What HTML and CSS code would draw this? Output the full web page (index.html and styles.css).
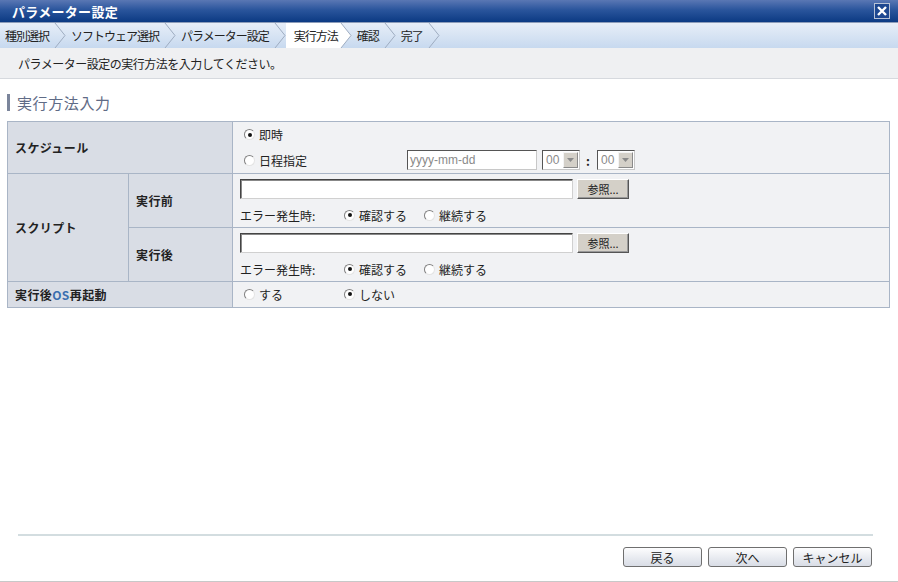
FILE: index.html
```html
<!DOCTYPE html>
<html lang="ja">
<head>
    <meta charset="UTF-8">
    <title>パラメーター設定</title>
    <link rel="stylesheet" href="styles.css">
</head>
<body>
    <div class="window">
        <div class="titlebar">
            <span class="title">パラメーター設定</span>
            <span class="close-btn">
                <svg width="14" height="14" viewBox="0 0 14 14"><path d="M3 3 L11 11 M11 3 L3 11" stroke="#fff" stroke-width="2.4" fill="none"/></svg>
            </span>
        </div>

        <div class="steps">
            <div class="step first">種別選択</div>
            <svg class="sep" width="12" height="25" viewBox="0 0 12 25"><polyline points="1,0 11,12.5 1,25" fill="none" stroke="#9eacc0"/></svg>
            <div class="step">ソフトウェア選択</div>
            <svg class="sep" width="12" height="25" viewBox="0 0 12 25"><polyline points="1,0 11,12.5 1,25" fill="none" stroke="#9eacc0"/></svg>
            <div class="step">パラメーター設定</div>
            <svg class="sep" width="12" height="25" viewBox="0 0 12 25"><polyline points="1,0 11,12.5 1,25" fill="none" stroke="#9eacc0"/></svg>
            <div class="step active">実行方法</div>
            <svg class="sep" width="12" height="25" viewBox="0 0 12 25"><polygon points="0,0 1,0 11,12.5 1,25 0,25" fill="#fff"/><polyline points="1,0 11,12.5 1,25" fill="none" stroke="#9eacc0"/></svg>
            <div class="step">確認</div>
            <svg class="sep" width="12" height="25" viewBox="0 0 12 25"><polyline points="1,0 11,12.5 1,25" fill="none" stroke="#9eacc0"/></svg>
            <div class="step">完了</div>
            <svg class="sep" width="12" height="25" viewBox="0 0 12 25"><polyline points="1,0 11,12.5 1,25" fill="none" stroke="#9eacc0"/></svg>
        </div>

        <div class="guide">パラメーター設定の実行方法を入力してください。</div>

        <div class="content">
            <h2 class="section-title">実行方法入力</h2>

            <table class="form-table">
                <colgroup>
                    <col class="col-label1">
                    <col class="col-label2">
                    <col>
                </colgroup>
                <tr class="row-schedule">
                    <th colspan="2">スケジュール</th>
                    <td class="value pad-radio">
                        <div class="line line-first">
                            <span class="opt"><span class="radio checked"></span>即時</span>
                        </div>
                        <div class="line">
                            <span class="opt opt-date"><span class="radio"></span>日程指定</span>
                            <span class="date-input">yyyy-mm-dd</span>
                            <span class="select"><span class="sel-val">00</span><span class="sel-arrow"><svg width="7" height="4" viewBox="0 0 7 4"><polygon points="0,0 7,0 3.5,4" fill="#8a8a8a"/></svg></span></span>
                            <span class="colon">:</span>
                            <span class="select"><span class="sel-val">00</span><span class="sel-arrow"><svg width="7" height="4" viewBox="0 0 7 4"><polygon points="0,0 7,0 3.5,4" fill="#8a8a8a"/></svg></span></span>
                        </div>
                    </td>
                </tr>
                <tr class="row-script">
                    <th rowspan="2">スクリプト</th>
                    <th>実行前</th>
                    <td class="value pad-input">
                        <div class="file-line">
                            <span class="text-input"></span>
                            <span class="browse-btn">参照...</span>
                        </div>
                        <div class="line err-line">
                            <span class="err-label">エラー発生時:</span>
                            <span class="opt opt-confirm"><span class="radio checked"></span>確認する</span>
                            <span class="opt"><span class="radio"></span>継続する</span>
                        </div>
                    </td>
                </tr>
                <tr class="row-script">
                    <th>実行後</th>
                    <td class="value pad-input">
                        <div class="file-line">
                            <span class="text-input"></span>
                            <span class="browse-btn">参照...</span>
                        </div>
                        <div class="line err-line">
                            <span class="err-label">エラー発生時:</span>
                            <span class="opt opt-confirm"><span class="radio checked"></span>確認する</span>
                            <span class="opt"><span class="radio"></span>継続する</span>
                        </div>
                    </td>
                </tr>
                <tr class="row-reboot">
                    <th colspan="2">実行後<span class="os">OS</span>再起動</th>
                    <td class="value pad-radio">
                        <div class="line line-reboot">
                            <span class="opt opt-reboot"><span class="radio"></span>する</span>
                            <span class="opt"><span class="radio checked"></span>しない</span>
                        </div>
                    </td>
                </tr>
            </table>
        </div>

        <div class="footer">
            <div class="footer-rule"></div>
            <div class="buttons">
                <span class="btn">戻る</span>
                <span class="btn">次へ</span>
                <span class="btn">キャンセル</span>
            </div>
        </div>
    </div>
</body>
</html>
```

FILE: styles.css
```css
* {
    margin: 0;
    padding: 0;
    box-sizing: border-box;
}

body {
    font-family: "Noto Sans CJK JP", "Noto Sans", sans-serif;
    font-size: 12px;
    color: #222;
    background: #fff;
}

.window {
    width: 898px;
    height: 582px;
    display: flex;
    flex-direction: column;
    border-bottom: 1px solid #c8c8c8;
}

/* Title bar */
.titlebar {
    height: 23px;
    display: flex;
    align-items: center;
    justify-content: space-between;
    padding: 0 8px 0 12px;
    background: linear-gradient(#5a77b4, #2a559c 45%, #0c3a83);
    border-bottom: 1px solid #8c9cb9;
}

.title {
    color: #fff;
    font-weight: bold;
    font-size: 13px;
    letter-spacing: 0.3px;
}

.close-btn {
    width: 16px;
    height: 16px;
    border: 1px solid #b7c2d6;
    display: flex;
    align-items: center;
    justify-content: center;
    background: #1d4790;
}

/* Steps */
.steps {
    height: 25px;
    display: flex;
    align-items: stretch;
    background: linear-gradient(#e7eef8, #c7d9ef);
    letter-spacing: -1px;
}

.step {
    display: flex;
    align-items: center;
    padding: 0 5px 0 5px;
    color: #222;
}

.step.first {
    padding-left: 5px;
}

.step.active {
    background: #fff;
    padding: 0 2px 0 8px;
}

.sep {
    display: block;
    flex: none;
}

/* Guide */
.guide {
    height: 31px;
    display: flex;
    align-items: center;
    padding-left: 18px;
    background: #eff0f2;
    border-bottom: 1px solid #d6d9de;
    letter-spacing: -0.5px;
}

/* Content */
.content {
    flex: 1;
    padding: 15px 8px 0 7px;
}

.section-title {
    font-size: 15px;
    font-weight: normal;
    color: #5f6b86;
    border-left: 3px solid #7b859b;
    padding-left: 7px;
    height: 17px;
    line-height: 17px;
    margin-bottom: 10px;
    letter-spacing: 0.6px;
}

.form-table {
    width: 883px;
    border-collapse: collapse;
    table-layout: fixed;
}

.col-label1 {
    width: 121px;
}

.col-label2 {
    width: 104px;
}

.form-table th,
.form-table td {
    border: 1px solid #a9b5c6;
}

.form-table th {
    background: #d9dde5;
    text-align: left;
    font-weight: bold;
    padding-left: 7px;
    letter-spacing: 0.4px;
}

.os {
    color: #3a6fb0;
}

.value {
    background: #f1f2f4;
    vertical-align: top;
}

.pad-radio {
    padding-left: 11px;
}

.pad-input {
    padding: 5px 0 0 7px;
}

.row-schedule {
    height: 52px;
}

.row-script {
    height: 54px;
}

.row-reboot {
    height: 26px;
}

.line {
    display: flex;
    align-items: center;
    height: 26px;
}

.line-first {
    height: 25px;
}

.err-line {
    height: 20px;
    margin-top: 6px;
}

.line-reboot {
    height: 24px;
}

.opt {
    display: flex;
    align-items: center;
    gap: 4px;
}

.opt-date {
    width: 163px;
}

.opt-confirm {
    width: 80px;
}

.opt-reboot {
    width: 100px;
}

.err-label {
    width: 104px;
}

.radio {
    width: 11px;
    height: 11px;
    border-radius: 50%;
    border: 1px solid;
    border-color: #808080 #e4e4e4 #e4e4e4 #808080;
    background: #fff;
    position: relative;
    flex: none;
}

.radio.checked::after {
    content: "";
    position: absolute;
    left: 2.5px;
    top: 2.5px;
    width: 4px;
    height: 4px;
    border-radius: 50%;
    background: #111;
}

.date-input {
    width: 130px;
    height: 20px;
    border: 1px solid;
    border-color: #555 #c8c8c8 #c8c8c8 #555;
    background: #fff;
    color: #8a8a8a;
    display: flex;
    align-items: center;
    padding-left: 2px;
    font-family: "Liberation Sans", sans-serif;
    font-size: 12px;
}

.select {
    width: 38px;
    height: 20px;
    border: 1px solid;
    border-color: #555 #c8c8c8 #c8c8c8 #555;
    background: #fff;
    display: flex;
    align-items: center;
    justify-content: space-between;
    padding: 1px 1px 1px 3px;
    margin-left: 5px;
    color: #8a8a8a;
    font-family: "Liberation Sans", sans-serif;
}

.sel-arrow {
    width: 15px;
    height: 16px;
    background: #d4d0c8;
    border: 1px solid;
    border-color: #f4f4f4 #8a8a8a #8a8a8a #f4f4f4;
    display: flex;
    align-items: center;
    justify-content: center;
}

.colon {
    font-weight: bold;
    margin-left: 6px;
    width: 6px;
}

.file-line {
    display: flex;
    align-items: center;
    gap: 4px;
    height: 20px;
}

.text-input {
    width: 333px;
    height: 20px;
    border: 1px solid;
    border-color: #444 #d0d0d0 #d0d0d0 #444;
    background: #fff;
    box-shadow: inset 1px 1px 0 #888;
}

.browse-btn {
    width: 52px;
    height: 20px;
    background: #d4d0c8;
    border: 1px solid;
    border-color: #fff #555 #555 #fff;
    box-shadow: inset -1px -1px 0 #999;
    display: flex;
    align-items: center;
    justify-content: center;
    font-size: 11px;
}

/* Footer */
.footer {
    height: 47px;
    padding: 0 25px 0 18px;
}

.footer-rule {
    height: 2px;
    background: #d3dde0;
}

.buttons {
    display: flex;
    justify-content: flex-end;
    gap: 6px;
    margin-top: 11px;
    margin-right: 1px;
}

.btn {
    width: 79px;
    height: 20px;
    border: 1px solid #6f6f6f;
    border-radius: 3px;
    background: linear-gradient(#fdfdfe, #e6e9ef 60%, #d9dde6);
    display: flex;
    align-items: center;
    justify-content: center;
    font-size: 12px;
}
```
